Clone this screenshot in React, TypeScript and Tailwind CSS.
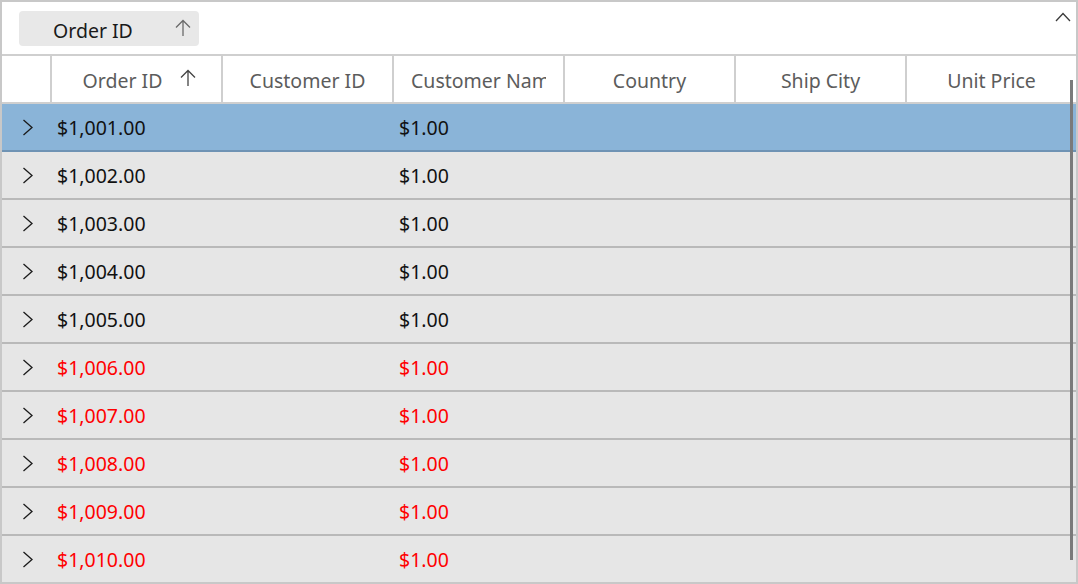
import React from "react";

const font = { fontFamily: '"Noto Sans", "Open Sans", sans-serif' };

function UpArrow({ color = "#6b6b6b" }: { color?: string }) {
  return (
    <svg width="16" height="18" viewBox="0 0 16 18" fill="none">
      <path d="M8 17V1.5M1 8.5L8 1.5L15 8.5" stroke={color} strokeWidth="1.3" />
    </svg>
  );
}

function RightChevron() {
  return (
    <svg width="12" height="17" viewBox="0 0 12 17" fill="none">
      <path d="M1.5 1L10 8.5L1.5 16" stroke="#1a1a1a" strokeWidth="1.3" />
    </svg>
  );
}

const rows = Array.from({ length: 10 }, (_, i) => ({
  id: `$1,${String(i + 1).padStart(3, "0")}.00`,
  price: "$1.00",
  red: i >= 5,
  selected: i === 0,
}));

const headers = ["Customer ID", "Customer Name", "Country", "Ship City", "Unit Price"];

export default function App() {
  return (
    <div
      className="relative w-[1078px] h-[584px] overflow-hidden border-2 border-[#c8c8c8] bg-white"
      style={font}
    >
      <div className="flex h-[54px] items-start justify-between border-b-2 border-[#cfcfcf] pl-[17px] pr-[5px]">
        <div className="mt-[9px] flex h-[35px] w-[180px] items-center rounded-[4px] bg-[#e8e8e8] pl-[34px]">
          <span className="mt-[5px] text-[19.5px] leading-none text-[#1a1a1a]">Order ID</span>
          <span className="ml-[42px] mt-[-2px]">
            <UpArrow />
          </span>
        </div>
        <svg className="mt-[10px]" width="16" height="10" viewBox="0 0 16 10" fill="none">
          <path d="M1 9L8 1.5L15 9" stroke="#3a3a3a" strokeWidth="1.3" />
        </svg>
      </div>
      <div className="grid h-[48px] grid-cols-[48px_171px_171px_171px_171px_171px_171px] border-b-2 border-[#cfcfcf]">
        <div />
        <div className="flex items-center justify-center gap-[18px] border-l-2 border-[#cfcfcf] pl-[6px] pt-[3px] text-[19.5px] text-[#5c5c5c]">
          <span>Order ID</span>
          <span className="mt-[-5px]">
            <UpArrow color="#444444" />
          </span>
        </div>
        {headers.map((h) => (
          <div
            key={h}
            className={`flex items-center overflow-hidden whitespace-nowrap border-l-2 border-[#cfcfcf] pt-[3px] text-[19.5px] text-[#5c5c5c] ${
              h === "Customer Name" ? "justify-start pl-[17px] pr-[17px]" : "justify-center px-[6px]"
            }`}
          >
            <span className={h === "Customer Name" ? "block w-full overflow-hidden" : ""}>{h}</span>
          </div>
        ))}
      </div>
      {rows.map((r) => (
        <div
          key={r.id}
          className={`grid h-[48px] grid-cols-[48px_171px_171px_171px_171px_171px_171px] border-b-2 text-[19.5px] ${
            r.selected ? "border-[#6f93b4] bg-[#8ab4d8]" : "border-[#b9b9b9] bg-[#e6e6e6]"
          } ${r.red ? "text-[#ff0000]" : "text-[#111111]"}`}
        >
          <div className="flex items-center pl-[20px]">
            <RightChevron />
          </div>
          <div className="flex items-center pl-[7px] pt-[2px]">{r.id}</div>
          <div />
          <div className="flex items-center pl-[7px] pt-[2px]">{r.price}</div>
          <div />
          <div />
          <div />
        </div>
      ))}
      <div className="absolute right-[3px] top-[78px] h-[480px] w-[3px] bg-[#7a7a7a]" />
    </div>
  );
}
